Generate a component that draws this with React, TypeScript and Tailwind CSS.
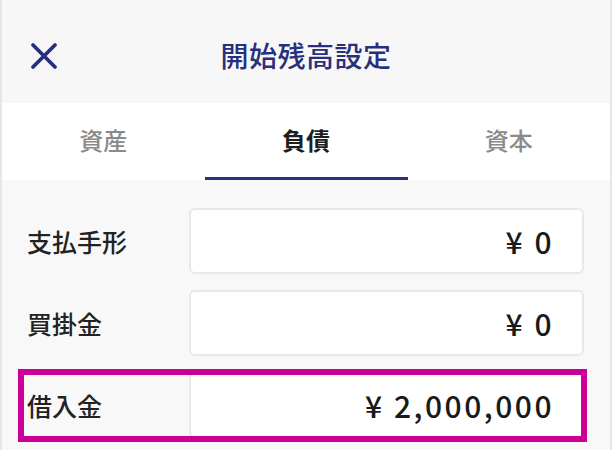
const rows = [
  { label: '支払手形', value: '¥ 0' },
  { label: '買掛金', value: '¥ 0' },
  { label: '借入金', value: '¥ 2,000,000', highlight: true },
];

const tabs = ['資産', '負債', '資本'];

function CloseIcon() {
  return (
    <svg width="28" height="28" viewBox="0 0 28 28" fill="none">
      <path d="M3 3L25 25M25 3L3 25" stroke="#27307c" strokeWidth="3.8" strokeLinecap="round" />
    </svg>
  );
}

export default function App() {
  return (
    <div
      className="w-[612px] h-[450px] overflow-hidden bg-[#f8f8f8] border-x-2 border-[#e6e6e6]"
      style={{ fontFamily: '"Noto Sans CJK JP", "Noto Sans", sans-serif' }}
    >
      {/* header */}
      <header className="h-[103px] grid grid-cols-[1fr_auto_1fr] items-center bg-[#f7f7f7] pt-[6px]">
        <div className="pl-[28px] pt-[2px]">
          <CloseIcon />
        </div>
        <h1 className="text-[28px] font-medium text-[#27307c] leading-none tracking-[0.5px]">開始残高設定</h1>
        <div />
      </header>

      {/* tabs */}
      <nav className="h-[77px] grid grid-cols-3 bg-white">
        {tabs.map((t, i) => (
          <div key={t} className="flex flex-col items-center">
            <div
              className={`flex-1 flex items-center text-[24px] leading-none ${
                i === 1 ? 'font-bold text-[#1e1e1e]' : 'font-medium text-[#8a8a8a]'
              }`}
            >
              {t}
            </div>
            <div className={`h-[3px] w-[203px] ${i === 1 ? 'bg-[#27307c]' : 'bg-transparent'}`} />
          </div>
        ))}
      </nav>

      {/* rows */}
      <div className="flex flex-col gap-[16px] pt-[28px] pl-[25px] pr-[26px]">
        {rows.map((r) => (
          <div key={r.label} className="relative flex items-center h-[66px]">
            <div className="w-[162px] text-[25px] font-medium text-[#222] leading-none">{r.label}</div>
            <div className="flex-1 h-full flex items-center justify-end pr-[28px] bg-white border-2 border-[#e8e8e8] rounded-[6px] text-[30px] font-medium text-[#1a1a1a] leading-none tracking-[2.5px]">
              {r.value}
            </div>
            {r.highlight && (
              <div className="absolute left-[-9px] top-[-3px] w-[569px] h-[73px] border-[6px] border-[#cc0099] pointer-events-none" />
            )}
          </div>
        ))}
      </div>
    </div>
  );
}
